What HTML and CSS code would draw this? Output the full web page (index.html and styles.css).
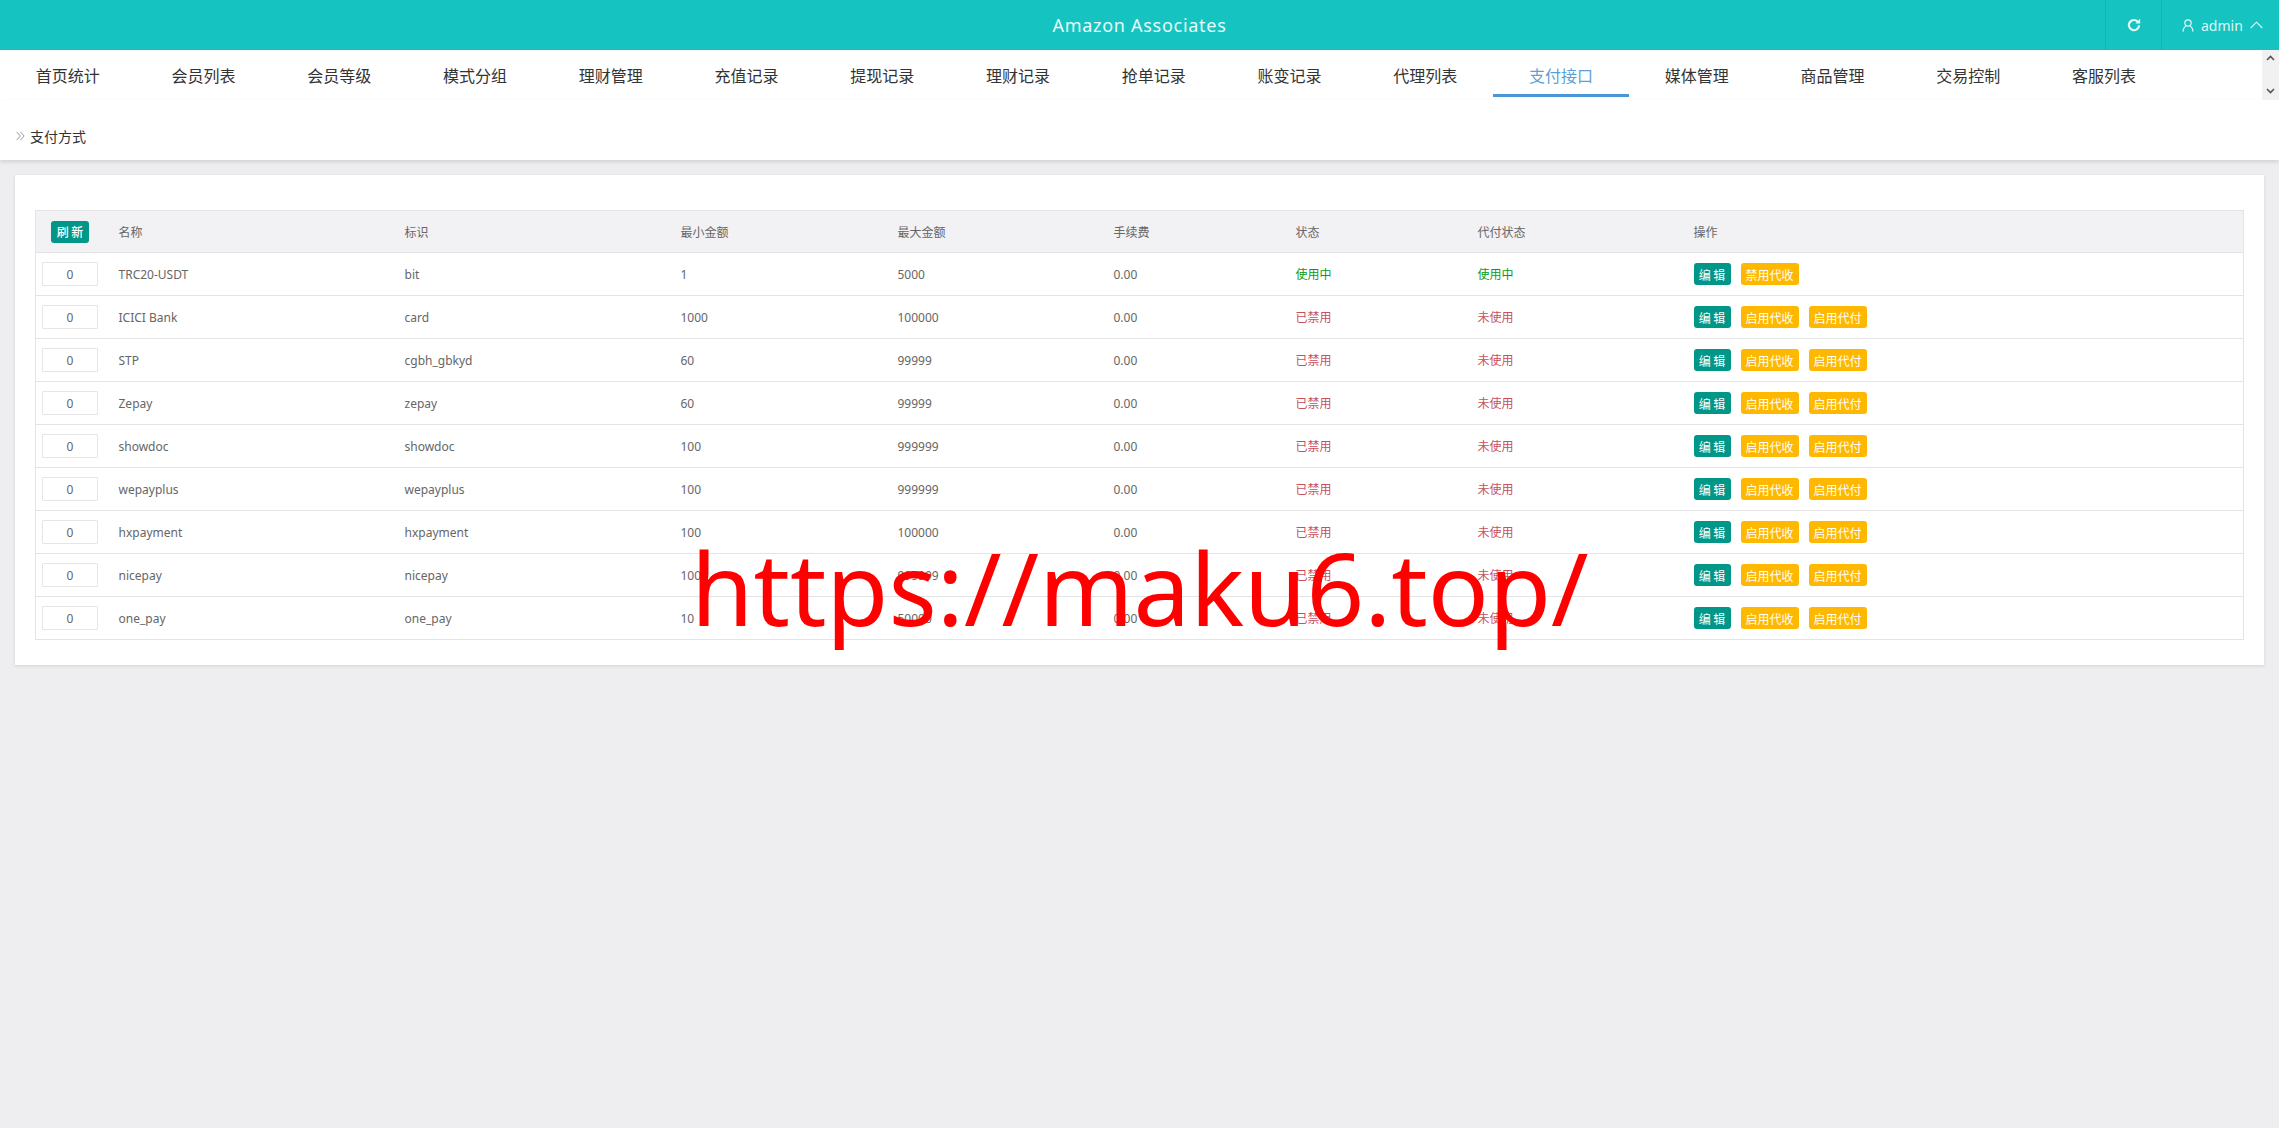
FILE: index.html
```html
<!DOCTYPE html>
<html lang="zh-CN">
<head>
<meta charset="utf-8">
<title>支付方式</title>
<link rel="stylesheet" href="styles.css">
</head>
<body>
<header class="topbar">
  <div class="brand">Amazon Associates</div>
  <div class="top-actions">
    <div class="top-cell refresh">
      <svg width="14" height="14" viewBox="0 0 14 14" fill="none"><path d="M11.2 4.2A5.1 5.1 0 1 0 12.1 7.4" stroke="#e4f8f7" stroke-width="2.2"/><path d="M8.4 5.6h4.8V.8z" fill="#e4f8f7"/></svg>
    </div>
    <div class="top-cell user">
      <svg width="12" height="13" viewBox="0 0 12 13" fill="none"><circle cx="6" cy="4" r="3.2" stroke="#dff7f6" stroke-width="1.2"/><path d="M1 12.6C1.3 9.4 3 7.4 4.4 7M11 12.6C10.7 9.4 9 7.4 7.6 7" stroke="#dff7f6" stroke-width="1.2"/></svg>
      <span>admin</span>
      <svg width="13" height="8" viewBox="0 0 13 8" fill="none"><path d="M.7 7 6.5 1.2 12.3 7" stroke="#dff7f6" stroke-width="1.1"/></svg>
    </div>
  </div>
</header>
<nav class="nav">
  <ul class="tabs">
    <li class="tab">首页统计</li>
    <li class="tab">会员列表</li>
    <li class="tab">会员等级</li>
    <li class="tab">模式分组</li>
    <li class="tab">理财管理</li>
    <li class="tab">充值记录</li>
    <li class="tab">提现记录</li>
    <li class="tab">理财记录</li>
    <li class="tab">抢单记录</li>
    <li class="tab">账变记录</li>
    <li class="tab">代理列表</li>
    <li class="tab active">支付接口</li>
    <li class="tab">媒体管理</li>
    <li class="tab">商品管理</li>
    <li class="tab">交易控制</li>
    <li class="tab">客服列表</li>
  </ul>
  <div class="scroller">
    <svg width="9" height="6" viewBox="0 0 9 6" fill="none"><path d="M1 5 4.5 1.5 8 5" stroke="#555" stroke-width="1.6"/></svg>
    <svg width="9" height="6" viewBox="0 0 9 6" fill="none"><path d="M1 1 4.5 4.5 8 1" stroke="#555" stroke-width="1.6"/></svg>
  </div>
</nav>
<div class="crumb">
  <svg width="9" height="10" viewBox="0 0 9 10" fill="none"><path d="M.7.9 4.4 5 .7 9.1M4.4.9 8.1 5 4.4 9.1" stroke="#999" stroke-width="1"/></svg>
  <span>支付方式</span>
</div>
<main class="card">
  <table class="grid">
    <colgroup>
      <col class="c0"><col class="c1"><col class="c2"><col class="c3"><col class="c4"><col class="c5"><col class="c6"><col class="c7"><col class="c8">
    </colgroup>
    <thead>
      <tr>
        <th class="first"><button class="btn teal refresh-btn">刷 新</button></th>
        <th>名称</th><th>标识</th><th>最小金额</th><th>最大金额</th><th>手续费</th><th>状态</th><th>代付状态</th><th>操作</th>
      </tr>
    </thead>
    <tbody>
      <tr>
        <td class="first"><input class="sort" value="0"></td>
        <td>TRC20-USDT</td><td>bit</td><td>1</td><td>5000</td><td>0.00</td>
        <td class="on">使用中</td><td class="on">使用中</td>
        <td><div class="ops"><button class="btn teal">编 辑</button><button class="btn amber">禁用代收</button></div></td>
      </tr>
      <tr>
        <td class="first"><input class="sort" value="0"></td>
        <td>ICICI Bank</td><td>card</td><td>1000</td><td>100000</td><td>0.00</td>
        <td class="off">已禁用</td><td class="off">未使用</td>
        <td><div class="ops"><button class="btn teal">编 辑</button><button class="btn amber">启用代收</button><button class="btn amber">启用代付</button></div></td>
      </tr>
      <tr>
        <td class="first"><input class="sort" value="0"></td>
        <td>STP</td><td>cgbh_gbkyd</td><td>60</td><td>99999</td><td>0.00</td>
        <td class="off">已禁用</td><td class="off">未使用</td>
        <td><div class="ops"><button class="btn teal">编 辑</button><button class="btn amber">启用代收</button><button class="btn amber">启用代付</button></div></td>
      </tr>
      <tr>
        <td class="first"><input class="sort" value="0"></td>
        <td>Zepay</td><td>zepay</td><td>60</td><td>99999</td><td>0.00</td>
        <td class="off">已禁用</td><td class="off">未使用</td>
        <td><div class="ops"><button class="btn teal">编 辑</button><button class="btn amber">启用代收</button><button class="btn amber">启用代付</button></div></td>
      </tr>
      <tr>
        <td class="first"><input class="sort" value="0"></td>
        <td>showdoc</td><td>showdoc</td><td>100</td><td>999999</td><td>0.00</td>
        <td class="off">已禁用</td><td class="off">未使用</td>
        <td><div class="ops"><button class="btn teal">编 辑</button><button class="btn amber">启用代收</button><button class="btn amber">启用代付</button></div></td>
      </tr>
      <tr>
        <td class="first"><input class="sort" value="0"></td>
        <td>wepayplus</td><td>wepayplus</td><td>100</td><td>999999</td><td>0.00</td>
        <td class="off">已禁用</td><td class="off">未使用</td>
        <td><div class="ops"><button class="btn teal">编 辑</button><button class="btn amber">启用代收</button><button class="btn amber">启用代付</button></div></td>
      </tr>
      <tr>
        <td class="first"><input class="sort" value="0"></td>
        <td>hxpayment</td><td>hxpayment</td><td>100</td><td>100000</td><td>0.00</td>
        <td class="off">已禁用</td><td class="off">未使用</td>
        <td><div class="ops"><button class="btn teal">编 辑</button><button class="btn amber">启用代收</button><button class="btn amber">启用代付</button></div></td>
      </tr>
      <tr>
        <td class="first"><input class="sort" value="0"></td>
        <td>nicepay</td><td>nicepay</td><td>100</td><td>999999</td><td>0.00</td>
        <td class="off">已禁用</td><td class="off">未使用</td>
        <td><div class="ops"><button class="btn teal">编 辑</button><button class="btn amber">启用代收</button><button class="btn amber">启用代付</button></div></td>
      </tr>
      <tr>
        <td class="first"><input class="sort" value="0"></td>
        <td>one_pay</td><td>one_pay</td><td>10</td><td>50000</td><td>0.00</td>
        <td class="off">已禁用</td><td class="off">未使用</td>
        <td><div class="ops"><button class="btn teal">编 辑</button><button class="btn amber">启用代收</button><button class="btn amber">启用代付</button></div></td>
      </tr>
    </tbody>
  </table>
</main>
<div class="watermark">https://maku6.top/</div>
</body>
</html>
```
FILE: styles.css
```css
* { box-sizing: border-box; }
html, body { margin: 0; padding: 0; }
body {
  position: relative;
  width: 2279px;
  height: 1128px;
  overflow: hidden;
  background: #eeedf0;
  color: #666;
  font-family: "Noto Sans", "Noto Sans CJK SC", sans-serif;
  font-size: 12px;
}
.topbar {
  display: flex;
  justify-content: center;
  align-items: center;
  position: relative;
  height: 50px;
  background: #15c3c1;
}
.brand { color: #e8fbfa; font-size: 18px; letter-spacing: .72px; }
.top-actions {
  position: absolute;
  top: 0;
  right: 0;
  display: flex;
  height: 50px;
}
.top-cell {
  display: flex;
  align-items: center;
  height: 50px;
  border-left: 1px solid #12b3b1;
}
.refresh { width: 56px; justify-content: center; }
.user { width: 118px; padding-left: 20px; gap: 7px; color: #dff7f6; font-size: 14px; }
.nav {
  display: flex;
  justify-content: space-between;
  height: 50px;
  background: #fff;
}
.tabs {
  display: grid;
  grid-template-columns: repeat(16, 135.75px);
  margin: 0;
  padding: 0;
  list-style: none;
}
.tab {
  height: 47px;
  line-height: 52px;
  text-align: center;
  color: #333;
  font-size: 16px;
}
.tab.active {
  height: 47px;
  border-bottom: 3px solid #4a96d6;
  color: #5d9fd6;
}
.scroller {
  display: flex;
  flex-direction: column;
  justify-content: space-between;
  align-items: center;
  width: 17px;
  height: 50px;
  padding: 5px 0 6px;
  background: #f1f1f1;
}
.crumb {
  display: flex;
  align-items: center;
  gap: 5px;
  height: 60px;
  padding: 12px 0 0 16px;
  background: #fff;
  box-shadow: 0 2px 4px rgba(0, 0, 0, .12);
  color: #333;
  font-size: 14px;
}
.card {
  width: 2249px;
  height: 490px;
  margin: 15px 0 0 15px;
  padding: 35px 20px 0;
  background: #fff;
  box-shadow: 0 1px 3px rgba(0, 0, 0, .12);
}
.grid {
  width: 2209px;
  table-layout: fixed;
  border-collapse: collapse;
  border: 1px solid #e4e4e6;
}
.c0 { width: 73px; }
.c1 { width: 286px; }
.c2 { width: 276px; }
.c3 { width: 217px; }
.c4 { width: 216px; }
.c5 { width: 182px; }
.c6 { width: 182px; }
.c7 { width: 216px; }
.grid th, .grid td {
  padding: 0 10px;
  height: 43px;
  border-bottom: 1px solid #e4e4e6;
  text-align: left;
  font-weight: 400;
  color: #666;
}
.grid th { height: 42px; background: #f2f1f4; }
.grid .first { padding: 0; text-align: left; }
.grid .on { color: #0a9a16; }
.grid .off { color: #c8505c; }
.sort {
  display: block;
  width: 56px;
  height: 24px;
  margin-left: 6px;
  border: 1px solid #e6e6e6;
  border-radius: 1px;
  background: #fff;
  color: #666;
  font: 12px "Noto Sans", sans-serif;
  text-align: center;
}
.ops { display: flex; gap: 10px; }
.btn {
  height: 22px;
  padding: 0;
  border: 0;
  border-radius: 3px;
  color: #fff;
  font-family: "Noto Sans CJK SC", "Noto Sans", sans-serif;
  font-size: 12px;
}
.teal { width: 37px; background: #009688; }
.refresh-btn { display: block; width: 38px; margin-left: 15px; font-weight: 500; }
.amber { width: 58px; background: #ffb800; }
.watermark {
  position: absolute;
  top: 514px;
  left: 691px;
  color: #f00;
  font-size: 101px;
  line-height: 147px;
  white-space: nowrap;
}
```
